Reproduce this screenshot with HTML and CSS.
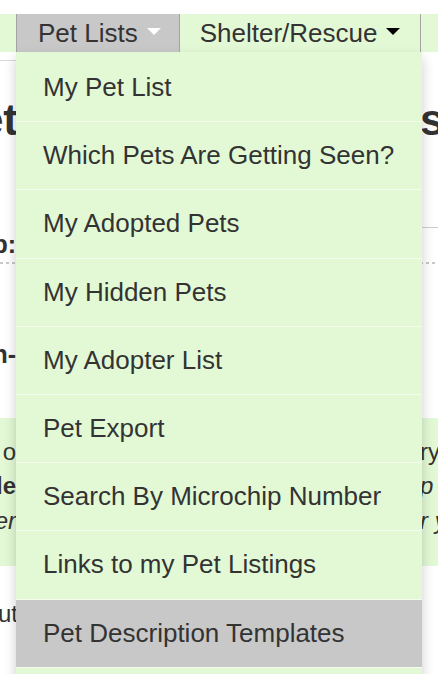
FILE: index.html
```html
<!DOCTYPE html>
<html lang="en">
<head>
<meta charset="utf-8">
<title>Pet Lists</title>
<link rel="stylesheet" href="styles.css">
</head>
<body>
<div class="page">
  <div class="topgap"></div>
  <nav class="navbar">
    <ul class="nav">
      <li class="nav-item open">
        <a class="nav-link">Pet Lists <span class="caret caret-white"></span></a>
        <ul class="dropdown-menu">
          <li class="menu-item">My Pet List</li>
          <li class="menu-item">Which Pets Are Getting Seen?</li>
          <li class="menu-item">My Adopted Pets</li>
          <li class="menu-item">My Hidden Pets</li>
          <li class="menu-item">My Adopter List</li>
          <li class="menu-item">Pet Export</li>
          <li class="menu-item">Search By Microchip Number</li>
          <li class="menu-item">Links to my Pet Listings</li>
          <li class="menu-item active">Pet Description Templates</li>
        </ul>
      </li>
      <li class="nav-item">
        <a class="nav-link">Shelter/Rescue <span class="caret"></span></a>
      </li>
    </ul>
  </nav>

  <main class="content">
    <div class="row row-rule">
      <div class="cell left rule-left"></div>
      <div class="cell right"></div>
    </div>
    <div class="row heading">
      <div class="cell left"><span>et</span></div>
      <div class="cell right"><span>s</span></div>
    </div>
    <div class="row row-gap">
      <div class="cell left"></div>
      <div class="cell right rule-right"></div>
    </div>
    <div class="row label">
      <div class="cell left"><span>p:</span></div>
      <div class="cell right"></div>
    </div>
    <div class="dots"></div>
    <div class="row label label-two">
      <div class="cell left"><span>n-</span></div>
      <div class="cell right"></div>
    </div>
    <div class="notice">
      <div class="row">
        <div class="cell left"><span>o</span></div>
        <div class="cell right"><span>ry</span></div>
      </div>
      <div class="row">
        <div class="cell left"><b>de</b></div>
        <div class="cell right"><i>p</i></div>
      </div>
      <div class="row">
        <div class="cell left"><i>er</i></div>
        <div class="cell right"><i>r y</i></div>
      </div>
    </div>
    <div class="row body-text">
      <div class="cell left"><span>ut</span></div>
      <div class="cell right"></div>
    </div>
  </main>
</div>
</body>
</html>
```

FILE: styles.css
```css
* {
  box-sizing: border-box;
}

html, body {
  margin: 0;
  padding: 0;
  background: #ffffff;
}

body {
  font-family: "Liberation Sans", Arial, Helvetica, sans-serif;
  color: #333333;
  overflow: hidden;
}

.page {
  width: 438px;
  height: 674px;
  overflow: hidden;
  position: relative;
}

.topgap {
  height: 14px;
}

.navbar {
  height: 38px;
  background: #e3f9d5;
  padding-left: 16px;
  position: relative;
  z-index: 5;
}

.nav {
  list-style: none;
  margin: 0;
  padding: 0;
  display: flex;
  height: 38px;
}

.nav-item {
  position: relative;
  height: 38px;
}

.nav-item + .nav-item .nav-link {
  border-left: none;
  padding-left: 20px;
}

.nav-link {
  display: flex;
  align-items: center;
  height: 38px;
  font-size: 26px;
  line-height: 38px;
  color: #333333;
  border-left: 1px solid #a4a4a4;
  border-right: 1px solid #a4a4a4;
  padding: 0 20px 0 21px;
}

.open > .nav-link {
  background: #c8c8c8;
  padding-right: 18px;
}

.caret {
  display: inline-block;
  width: 0;
  height: 0;
  margin-left: 9px;
  margin-top: -4px;
  border-top: 7px solid #000000;
  border-left: 7px solid transparent;
  border-right: 7px solid transparent;
}

.caret-white {
  border-top-color: #ffffff;
}

.dropdown-menu {
  position: absolute;
  top: 100%;
  left: 0;
  width: 406px;
  margin: 0;
  padding: 2px 0 12px;
  list-style: none;
  background: #e3f9d5;
  box-shadow: 0 6px 12px rgba(0, 0, 0, 0.2);
  z-index: 10;
}

.menu-item {
  font-size: 26px;
  line-height: 37.2px;
  padding: 15px 27px;
  color: #333333;
  border-bottom: 1px solid #f4fcee;
  white-space: nowrap;
}

.menu-item.active {
  background: #c8c8c8;
}

/* background page content (mostly hidden behind the open menu) */
.content {
  position: relative;
  z-index: 1;
}

.row {
  display: flex;
  justify-content: space-between;
}

.cell {
  width: 18px;
  overflow: hidden;
  white-space: nowrap;
  display: flex;
}

.cell.left {
  justify-content: flex-end;
}

.cell.right {
  justify-content: flex-start;
}

.row-rule {
  height: 9px;
}

.rule-left {
  border-bottom: 1px solid #d9d9d9;
}

.heading {
  margin-top: 33px;
  font-size: 44px;
  font-weight: bold;
  line-height: 52px;
  color: #333333;
}

.row-gap {
  height: 82px;
}

.rule-right {
  border-bottom: 1px solid #cfcfcf;
}

.label {
  margin-top: 1px;
  font-size: 25px;
  font-weight: bold;
  line-height: 30px;
}

.label .cell.left {
  width: 16px;
}

.dots {
  margin-top: 3px;
  height: 2px;
  background: repeating-linear-gradient(90deg, #c9c9c9 0 3px, transparent 3px 6px);
}

.label-two {
  margin-top: 75px;
}

.notice {
  margin-top: 49px;
  background: #e3f9d5;
  height: 148px;
  padding-top: 17px;
  font-size: 24px;
  line-height: 34.3px;
}

.notice .cell.left {
  width: 16px;
}

.body-text {
  margin-top: 31px;
  font-size: 24px;
  line-height: 34.3px;
}
```
